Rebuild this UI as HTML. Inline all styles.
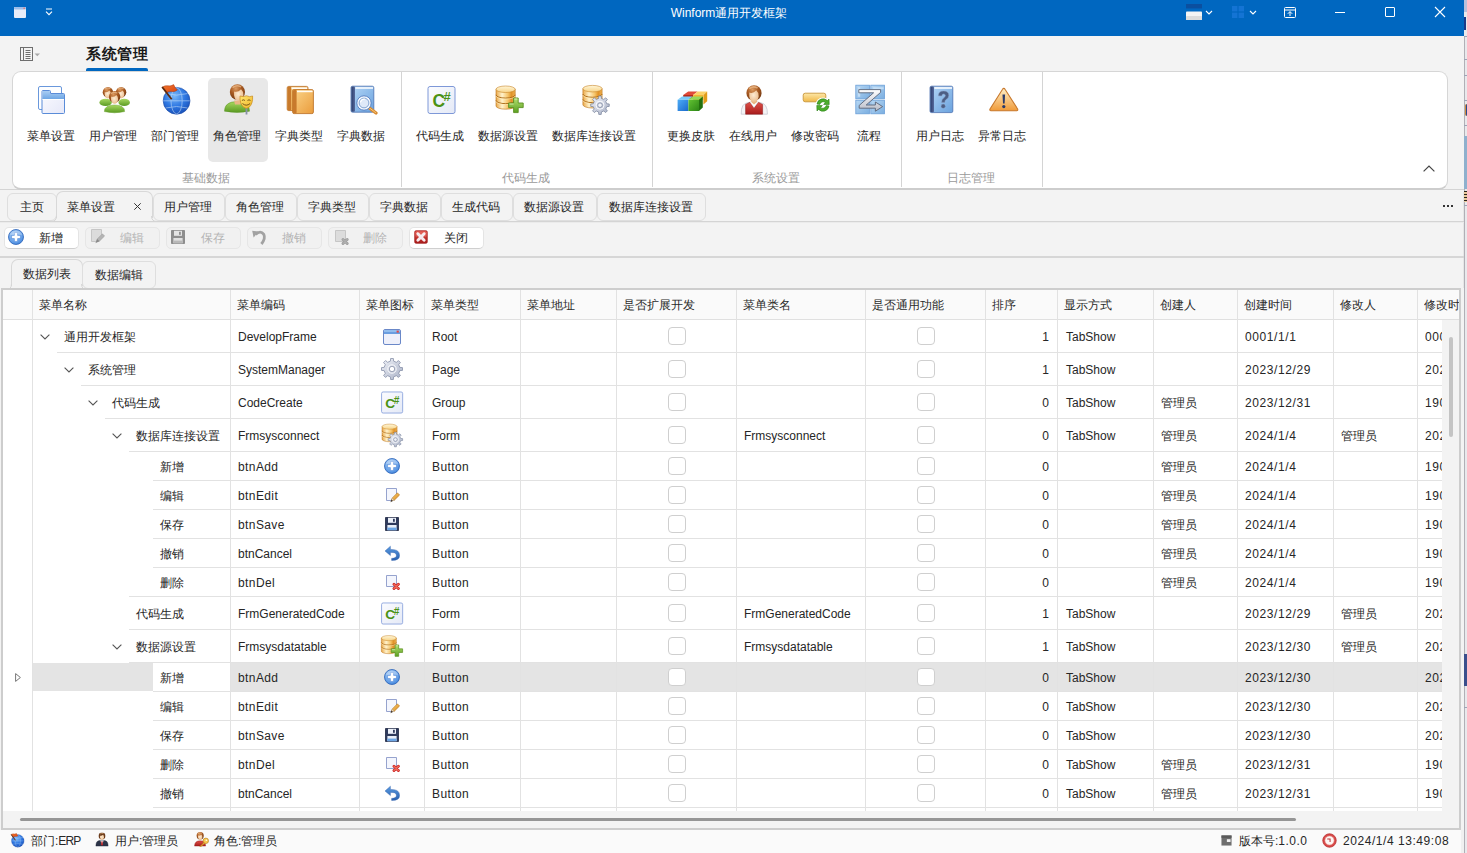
<!DOCTYPE html>
<html lang="zh"><head><meta charset="utf-8"><title>Winform通用开发框架</title>
<style>
*{box-sizing:border-box}
html,body{margin:0;padding:0}
body{width:1467px;height:853px;overflow:hidden;background:#f3f3f3;position:relative;
font-family:"Liberation Sans",sans-serif;font-size:12px;color:#262626;line-height:14px}
.a{position:absolute}
.t{position:absolute;white-space:nowrap;height:14px;line-height:14px}
.c{text-align:center}
.r{text-align:right}
.g{color:#9a9a9a}
.d{color:#b4b4b4}
.hl{position:absolute;height:1px;background:#e2e2e2}
.vl{position:absolute;width:1px;background:#e2e2e2}
.cb{position:absolute;width:18px;height:18px;border:1px solid #cfcfcf;border-radius:4px;background:#fff}
.tab{position:absolute;border:1px solid #dadada;border-bottom:none;border-radius:7px 7px 0 0;background:#f3f3f3}
.btn{position:absolute;height:22px;width:75px;border-radius:5px}
.btn.on{background:#fff;border:1px solid #e4e4e4;border-bottom-color:#cfcfcf}
.btn.off{background:#f1f1f1;border:1px solid #e6e6e6}
.dt{letter-spacing:0.6px}
.ls{letter-spacing:0.4px}
svg{position:absolute;overflow:visible}
</style></head>
<body>
<svg width="0" height="0" style="left:0;top:0"><defs>
<linearGradient id="gBlueV" x1="0" y1="0" x2="0" y2="1"><stop offset="0" stop-color="#a9cdf3"/><stop offset="1" stop-color="#6ea6e4"/></linearGradient>
<linearGradient id="gLav" x1="0" y1="0" x2="1" y2="1"><stop offset="0" stop-color="#fafbff"/><stop offset="1" stop-color="#e6e8f8"/></linearGradient>
<radialGradient id="gHair" cx=".4" cy=".28" r=".8"><stop offset="0" stop-color="#dc9a60"/><stop offset=".45" stop-color="#a85a22"/><stop offset="1" stop-color="#6a3410"/></radialGradient>
<linearGradient id="gCubeB" x1="0" y1="0" x2="1" y2="1"><stop offset="0" stop-color="#4cacf6"/><stop offset="1" stop-color="#1a68cc"/></linearGradient>
<linearGradient id="gCubeG" x1="0" y1="0" x2="1" y2="1"><stop offset="0" stop-color="#62c232"/><stop offset="1" stop-color="#2c8616"/></linearGradient>
<radialGradient id="gSkin" cx=".45" cy=".4" r=".7"><stop offset="0" stop-color="#fdebd3"/><stop offset="1" stop-color="#e8b684"/></radialGradient>
<linearGradient id="gGreen" x1="0" y1="0" x2="0" y2="1"><stop offset="0" stop-color="#a8d860"/><stop offset="1" stop-color="#5a9a22"/></linearGradient>
<radialGradient id="gGlobe" cx=".42" cy=".32" r=".78"><stop offset="0" stop-color="#7ab8f8"/><stop offset=".5" stop-color="#2f78e2"/><stop offset="1" stop-color="#1448b0"/></radialGradient>
<linearGradient id="gFlag" x1="0" y1="0" x2="1" y2="1"><stop offset="0" stop-color="#f47a30"/><stop offset="1" stop-color="#d8420e"/></linearGradient>
<linearGradient id="gMask" x1="0" y1="0" x2="1" y2="1"><stop offset="0" stop-color="#ffe870"/><stop offset="1" stop-color="#f0b428"/></linearGradient>
<linearGradient id="gBook" x1="0" y1="0" x2="1" y2="1"><stop offset="0" stop-color="#fbd58a"/><stop offset="1" stop-color="#ea9c3c"/></linearGradient>
<linearGradient id="gBookB" x1="0" y1="0" x2="1" y2="1"><stop offset="0" stop-color="#b4d6f6"/><stop offset="1" stop-color="#6aa2de"/></linearGradient>
<linearGradient id="gNavy" x1="0" y1="0" x2="1" y2="0"><stop offset="0" stop-color="#2c3c6c"/><stop offset="1" stop-color="#566a9c"/></linearGradient>
<linearGradient id="gCs" x1="0" y1="0" x2="1" y2="1"><stop offset="0" stop-color="#fbfcff"/><stop offset="1" stop-color="#e4e9f6"/></linearGradient>
<linearGradient id="gDb" x1="0" y1="0" x2="1" y2="0"><stop offset="0" stop-color="#eaa848"/><stop offset=".32" stop-color="#fff2cc"/><stop offset=".62" stop-color="#f6c468"/><stop offset=".8" stop-color="#e09228"/><stop offset="1" stop-color="#eeb050"/></linearGradient>
<linearGradient id="gDbTop" x1="0" y1="0" x2="0" y2="1"><stop offset="0" stop-color="#fff6d8"/><stop offset="1" stop-color="#f8d488"/></linearGradient>
<linearGradient id="gPlus" x1="0" y1="0" x2="0" y2="1"><stop offset="0" stop-color="#b4e070"/><stop offset="1" stop-color="#5aa020"/></linearGradient>
<linearGradient id="gGear" x1="0" y1="0" x2="1" y2="1"><stop offset="0" stop-color="#f2f4f9"/><stop offset="1" stop-color="#a8b0c6"/></linearGradient>
<linearGradient id="gRed" x1="0" y1="0" x2="0" y2="1"><stop offset="0" stop-color="#e05048"/><stop offset="1" stop-color="#a81c1c"/></linearGradient>
<linearGradient id="gYel" x1="0" y1="0" x2="0" y2="1"><stop offset="0" stop-color="#fde8a8"/><stop offset="1" stop-color="#f0b848"/></linearGradient>
<linearGradient id="gWarn" x1="0" y1="0" x2="0" y2="1"><stop offset="0" stop-color="#fff0c8"/><stop offset="1" stop-color="#f09a38"/></linearGradient>
<radialGradient id="gAdd" cx=".42" cy=".35" r=".75"><stop offset="0" stop-color="#b4d4f8"/><stop offset=".7" stop-color="#5c9ae6"/><stop offset="1" stop-color="#3a78d0"/></radialGradient>
<linearGradient id="gSq" x1="0" y1="0" x2="1" y2="1"><stop offset="0" stop-color="#b8d8f4"/><stop offset="1" stop-color="#7aaee0"/></linearGradient>
<linearGradient id="gZ" x1="0" y1="0" x2="0" y2="1"><stop offset="0" stop-color="#ffffff"/><stop offset="1" stop-color="#b8bcc8"/></linearGradient>
<linearGradient id="gUndo" x1="0" y1="0" x2="0" y2="1"><stop offset="0" stop-color="#5a9ae0"/><stop offset="1" stop-color="#2a62b0"/></linearGradient>
<linearGradient id="gPen" x1="0" y1="0" x2="1" y2="1"><stop offset="0" stop-color="#fbd070"/><stop offset="1" stop-color="#d88820"/></linearGradient>
<symbol id="i-menu" viewBox="0 0 32 32">
<rect x="2.5" y="2.5" width="23" height="23" rx="1.5" fill="#fdfeff" stroke="#6a98dc"/>
<path d="M6,7.5 Q6,6.5 7,6.5 L13.5,6.5 Q14.5,6.5 14.5,7.5 L14.5,9.5 L27.5,9.5 Q28.5,9.5 28.5,10.5 L28.5,28.5 Q28.5,29.5 27.5,29.5 L7,29.5 Q6,29.5 6,28.5Z" fill="url(#gLav)" stroke="#5a8cd8"/>
<path d="M6.5,7.5 Q6.5,7 7,7 L13.5,7 Q14,7 14,7.5 L14,10 L28,10 L28,15 L6.5,15Z" fill="url(#gBlueV)"/>
<rect x="6.5" y="15" width="21.5" height="1" fill="#ffffff"/>
</symbol><symbol id="i-users" viewBox="0 0 32 32">
<ellipse cx="7.6" cy="18.4" rx="6.2" ry="3.6" fill="url(#gGreen)"/>
<ellipse cx="26.2" cy="18.4" rx="5.7" ry="3.6" fill="url(#gGreen)"/>
<ellipse cx="9.9" cy="8.2" rx="5.2" ry="5.30" fill="url(#gHair)"/><path d="M6.68,7.94 Q9.38,8.72 11.46,6.38 Q13.12,7.68 13.12,10.54 Q12.50,14.34 9.90,14.44 Q7.30,14.34 6.68,10.54Z" fill="url(#gSkin)"/><path d="M7.04,4.98 Q9.38,3.26 11.98,4.56" fill="none" stroke="#f0c090" stroke-width="1.14" stroke-linecap="round" opacity=".7"/><ellipse cx="23.1" cy="8.2" rx="5.2" ry="5.30" fill="url(#gHair)"/><path d="M19.88,7.94 Q22.58,8.72 24.66,6.38 Q26.32,7.68 26.32,10.54 Q25.70,14.34 23.10,14.44 Q20.50,14.34 19.88,10.54Z" fill="url(#gSkin)"/><path d="M20.24,4.98 Q22.58,3.26 25.18,4.56" fill="none" stroke="#f0c090" stroke-width="1.14" stroke-linecap="round" opacity=".7"/>
<path d="M6.4,27.6 Q6.4,21 16.5,21 Q26.6,21 26.6,27.6 Q16.5,30 6.4,27.6Z" fill="url(#gGreen)" stroke="#6aa030" stroke-width=".5"/>
<ellipse cx="16.6" cy="12.9" rx="5.7" ry="5.81" fill="url(#gHair)"/><path d="M13.07,12.62 Q16.03,13.47 18.31,10.91 Q20.13,12.33 20.13,15.46 Q19.45,19.63 16.60,19.74 Q13.75,19.63 13.07,15.46Z" fill="url(#gSkin)"/><path d="M13.47,9.37 Q16.03,7.49 18.88,8.91" fill="none" stroke="#f0c090" stroke-width="1.25" stroke-linecap="round" opacity=".7"/></symbol><symbol id="i-dept" viewBox="0 0 32 32">
<circle cx="16.6" cy="16.8" r="13.4" fill="url(#gGlobe)" stroke="#1a48a4" stroke-width=".6"/>
<g fill="none" stroke="#cfe4fb" stroke-width=".9" opacity=".6">
<ellipse cx="16.6" cy="16.8" rx="5.6" ry="13"/>
<path d="M3.4,16.8 H29.8 M5.6,9.6 Q16.6,12.6 27.6,9.6 M5.6,24 Q16.6,21 27.6,24"/>
</g>
<path d="M2.4,3 Q5,1.2 8,1.8 Q11,2.4 13.6,.6 Q15,4 17.4,6 Q14.6,8.2 11.6,7.6 Q8.8,7 6.6,8.8Z" fill="url(#gFlag)" stroke="#a83810" stroke-width=".5"/>
<path d="M1.4,3.4 L2.8,2.6 L12.4,14.8 L11,15.8Z" fill="#5a2a10"/>
</symbol><symbol id="i-role" viewBox="0 0 32 32">
<path d="M2.5,27.2 Q2.5,17.6 15,17.6 Q27.5,17.6 27.5,27.2 Q15,29.6 2.5,27.2Z" fill="url(#gGreen)" stroke="#5a9428" stroke-width=".5"/>
<path d="M12,16.4 L19.5,16.4 L18.5,20.6 L13,20.6Z" fill="#e8b684"/>
<ellipse cx="15.4" cy="7.9" rx="7.6" ry="7.75" fill="url(#gHair)"/><path d="M12.06,7.52 Q16.01,8.66 19.05,5.24 Q21.48,7.14 21.48,11.32 Q20.57,16.87 16.77,17.02 Q12.97,16.87 12.06,11.32Z" fill="url(#gSkin)"/><path d="M11.22,3.19 Q14.64,0.68 18.44,2.58" fill="none" stroke="#f0c090" stroke-width="1.67" stroke-linecap="round" opacity=".7"/>
<rect x="23.6" y="23.5" width="1.8" height="7" fill="#8890a8"/>
<path d="M18,12 Q21,13.4 24.4,11.8 Q27.6,13.4 30.6,12 Q31,19.8 27.2,23.2 Q24.4,25.4 21.6,23.2 Q17.6,19.8 18,12Z" fill="url(#gMask)" stroke="#c88a18" stroke-width=".7"/>
<path d="M20.2,16.2 Q21.4,15.2 22.6,16.2 M25.8,16.2 Q27,15.2 28.2,16.2 M20.8,19.8 Q24.3,22.8 27.8,19.8" fill="none" stroke="#6a4a10" stroke-width=".9" stroke-linecap="round"/>
</symbol><symbol id="i-books" viewBox="0 0 32 32"><rect x="3.2" y="2.4" width="20.8" height="24.2" rx="1.5" fill="url(#gBook)" stroke="#b8681c" stroke-width=".8"/><rect x="3.6" y="2.8" width="3.6" height="23.4" rx="1" fill="#c87a2c"/><rect x="7.6000000000000005" y="3.4" width="15.600000000000001" height="1.6" fill="#ffffff" opacity=".95"/><rect x="8.6" y="5.6" width="20.8" height="24" rx="1.5" fill="url(#gBook)" stroke="#b8681c" stroke-width=".8"/><rect x="9.0" y="6.0" width="3.6" height="23.2" rx="1" fill="#c87a2c"/><rect x="13.0" y="6.6" width="15.600000000000001" height="1.6" fill="#ffffff" opacity=".95"/></symbol><symbol id="i-booksearch" viewBox="0 0 32 32"><rect x="5" y="2.2" width="22.8" height="26" rx="1.5" fill="url(#gBookB)" stroke="#4a70b0" stroke-width=".8"/><rect x="5.4" y="2.6" width="3.6" height="25.2" rx="1" fill="url(#gNavy)"/><rect x="9.4" y="3.2" width="17.6" height="1.6" fill="#ffffff" opacity=".95"/>
<path d="M22,23 L30,29" stroke="#d88a30" stroke-width="3.2" stroke-linecap="round"/>
<path d="M22.4,23.2 L29.6,28.6" stroke="#f8c878" stroke-width="1" stroke-linecap="round"/>
<circle cx="18" cy="19" r="6" fill="#dfe9f8" stroke="#f6f9fe" stroke-width="2"/>
<circle cx="18" cy="19" r="7.2" fill="none" stroke="#5a80c0" stroke-width=".9"/>
<circle cx="18" cy="19" r="4.9" fill="none" stroke="#6a90c8" stroke-width=".8"/>
<path d="M14.5,18 Q15.5,15 18.5,15" fill="none" stroke="#fff" stroke-width="1.2" stroke-linecap="round"/>
</symbol><symbol id="i-csharp" viewBox="0 0 32 32">
<rect x="2" y="2.5" width="27" height="27" rx="2" fill="url(#gCs)" stroke="#7e98d8"/>
<text x="6.6" y="23" font-family="Liberation Sans, sans-serif" font-weight="bold" font-size="17.5" fill="#4a9216">C</text>
<text x="17.6" y="17.4" font-family="Liberation Sans, sans-serif" font-weight="bold" font-size="13" fill="#4a9216">#</text>
</symbol><symbol id="i-dbplus" viewBox="0 0 32 32"><path d="M3,5.264 V21.936 A9.6,3.2640000000000002 0 0 0 22.2,21.936 V5.264Z" fill="url(#gDb)" stroke="#b87018" stroke-width=".6"/><path d="M3,10.821333333333332 A9.6,3.2640000000000002 0 0 0 22.2,10.821333333333332" fill="none" stroke="#a86410" stroke-width=".9"/><path d="M3,11.821333333333332 A9.6,3.2640000000000002 0 0 0 22.2,11.821333333333332" fill="none" stroke="#fff0c0" stroke-width=".7" opacity=".8"/><path d="M3,16.378666666666664 A9.6,3.2640000000000002 0 0 0 22.2,16.378666666666664" fill="none" stroke="#a86410" stroke-width=".9"/><path d="M3,17.378666666666664 A9.6,3.2640000000000002 0 0 0 22.2,17.378666666666664" fill="none" stroke="#fff0c0" stroke-width=".7" opacity=".8"/><ellipse cx="12.6" cy="5.264" rx="9.6" ry="3.2640000000000002" fill="url(#gDbTop)" stroke="#c88428" stroke-width=".6"/>
<path d="M20.6,14 H25.2 V19 H30.2 V23.6 H25.2 V28.6 H20.6 V23.6 H15.6 V19 H20.6Z" fill="url(#gPlus)" stroke="#5a8e20" stroke-width=".9" stroke-linejoin="round"/>
<path d="M21.4,15 H24.4 M16.5,20 H20.6" stroke="#e4f6c0" stroke-width=".8" fill="none"/>
</symbol><symbol id="i-dbgear" viewBox="0 0 32 32"><path d="M3.9,4.664 V20.736 A9.6,3.2640000000000002 0 0 0 23.099999999999998,20.736 V4.664Z" fill="url(#gDb)" stroke="#b87018" stroke-width=".6"/><path d="M3.9,10.021333333333335 A9.6,3.2640000000000002 0 0 0 23.099999999999998,10.021333333333335" fill="none" stroke="#a86410" stroke-width=".9"/><path d="M3.9,11.021333333333335 A9.6,3.2640000000000002 0 0 0 23.099999999999998,11.021333333333335" fill="none" stroke="#fff0c0" stroke-width=".7" opacity=".8"/><path d="M3.9,15.378666666666668 A9.6,3.2640000000000002 0 0 0 23.099999999999998,15.378666666666668" fill="none" stroke="#a86410" stroke-width=".9"/><path d="M3.9,16.378666666666668 A9.6,3.2640000000000002 0 0 0 23.099999999999998,16.378666666666668" fill="none" stroke="#fff0c0" stroke-width=".7" opacity=".8"/><ellipse cx="13.5" cy="4.664" rx="9.6" ry="3.2640000000000002" fill="url(#gDbTop)" stroke="#c88428" stroke-width=".6"/><circle cx="21" cy="21.2" r="4" fill="#f2f4f8"/><path d="M27.75,19.79 L30.22,19.98 L30.22,22.42 L27.75,22.61 L26.77,24.98 L28.38,26.85 L26.65,28.58 L24.78,26.97 L22.41,27.95 L22.22,30.42 L19.78,30.42 L19.59,27.95 L17.22,26.97 L15.35,28.58 L13.62,26.85 L15.23,24.98 L14.25,22.61 L11.78,22.42 L11.78,19.98 L14.25,19.79 L15.23,17.42 L13.62,15.55 L15.35,13.82 L17.22,15.43 L19.59,14.45 L19.78,11.98 L22.22,11.98 L22.41,14.45 L24.78,15.43 L26.65,13.82 L28.38,15.55 L26.77,17.42Z M23.30,21.20 A2.3,2.3 0 1 0 18.70,21.20 A2.3,2.3 0 1 0 23.30,21.20Z" fill="url(#gGear)" stroke="#7e88a0" stroke-width=".8" fill-rule="evenodd"/><circle cx="21" cy="21.2" r="4" fill="none" stroke="#fafbfd" stroke-width="1"/></symbol><symbol id="i-skin" viewBox="0 0 32 32">
<path d="M7.2,11 L12.2,7.4 L21.6,7.4 L17.2,11Z" fill="#e04a38"/>
<path d="M7.2,11 H17.2 V15 H7.2Z" fill="#b42a1a"/>
<path d="M17.2,11 L21.6,7.4 L31.2,7.4 L27.4,11Z" fill="#fcd268"/>
<path d="M27.4,11 L31.2,7.4 V17.2 L27.4,20.6Z" fill="#e29c1a"/>
<path d="M17.2,11 H27.4 V16 H17.2Z" fill="#f2b434"/>
<path d="M1.6,15.8 L6,12.4 L16.6,12.4 L12.4,15.8Z" fill="#7accfa"/>
<rect x="1.6" y="15.8" width="10.8" height="11.2" fill="url(#gCubeB)"/>
<path d="M12.4,15.8 L16.6,12.4 L26.8,12.4 L23,15.8Z" fill="#96d858"/>
<rect x="12.4" y="15.8" width="10.6" height="11.2" fill="url(#gCubeG)"/>
<path d="M23,15.8 L26.8,12.4 V23.6 L23,27Z" fill="#22700e"/>
</symbol><symbol id="i-online" viewBox="0 0 32 32">
<path d="M3.2,30.2 Q2.8,19.4 10,18.6 L22,18.6 Q29.8,19.4 29.4,30.2Z" fill="#f4f4f6" stroke="#b8b8c4" stroke-width=".6"/>
<path d="M7.6,30.2 L7.6,20.4 L12,18.2 L16,24 L20.2,18.2 L24.6,20.4 L24.6,30.2Z" fill="url(#gRed)" stroke="#8a1414" stroke-width=".5"/>
<path d="M12,18 L16,23.6 L20.2,18 L18.4,16.6 L13.6,16.6Z" fill="#ffffff" stroke="#c8c8d0" stroke-width=".4"/>
<path d="M13.2,15 H19 V18 L16,20.5 L13.2,18Z" fill="#e8b684"/>
<ellipse cx="16" cy="9" rx="7.6" ry="7.75" fill="url(#gHair)"/><path d="M11.29,8.62 Q15.24,9.76 18.28,6.34 Q20.71,8.24 20.71,12.42 Q19.80,17.97 16.00,18.12 Q12.20,17.97 11.29,12.42Z" fill="url(#gSkin)"/><path d="M11.82,4.29 Q15.24,1.78 19.04,3.68" fill="none" stroke="#f0c090" stroke-width="1.67" stroke-linecap="round" opacity=".7"/></symbol><symbol id="i-pwd" viewBox="0 0 32 32">
<rect x="3.2" y="9.2" width="22.6" height="8.6" rx="2" fill="url(#gYel)" stroke="#c8963a" stroke-width=".9"/>
<circle cx="23" cy="21" r="7.6" fill="#ffffff"/>
<path d="M17,20 A6.1,6.1 0 0 1 27.4,16.6 L29,15 L29.2,20.6 L23.6,20.4 L25.4,18.6 A3.4,3.4 0 0 0 19.8,20.4Z" fill="#4cae2c" stroke="#2a8018" stroke-width=".6"/>
<path d="M29,22 A6.1,6.1 0 0 1 18.6,25.4 L17,27 L16.8,21.4 L22.4,21.6 L20.6,23.4 A3.4,3.4 0 0 0 26.2,21.6Z" fill="#4cae2c" stroke="#2a8018" stroke-width=".6"/>
</symbol><symbol id="i-flow" viewBox="0 0 32 32">
<rect x="1.8" y="1.2" width="13.6" height="13.6" fill="url(#gSq)" stroke="#6a9ed8" stroke-width=".8"/>
<rect x="16.8" y="1.2" width="13.6" height="13.6" fill="url(#gSq)" stroke="#6a9ed8" stroke-width=".8"/>
<rect x="1.8" y="16.2" width="13.6" height="13.6" fill="url(#gSq)" stroke="#6a9ed8" stroke-width=".8"/>
<rect x="16.8" y="16.2" width="13.6" height="13.6" fill="url(#gSq)" stroke="#6a9ed8" stroke-width=".8"/>
<path d="M3.8,3.2 h2.4 v9.6 h-2.4Z M19.2,3.2 h10.4 v2 h-10.4Z" fill="#d4e8fa" opacity=".7"/>
<path d="M4.8,5.6 H26.6 V8.4 L12.2,21 H21.4 V18 L28.6,22.6 L21.4,27.2 V24.2 H5.2 V21.4 L19.6,8.8 H4.8Z" fill="url(#gZ)" stroke="#5a6478" stroke-width=".9" stroke-linejoin="round"/>
</symbol><symbol id="i-log" viewBox="0 0 32 32"><rect x="5" y="2.2" width="22.8" height="26.4" rx="1.5" fill="url(#gBookB)" stroke="#4a70b0" stroke-width=".8"/><rect x="5.4" y="2.6" width="3.6" height="25.599999999999998" rx="1" fill="url(#gNavy)"/><rect x="9.4" y="3.2" width="17.6" height="1.6" fill="#ffffff" opacity=".95"/>
<path d="M13.4,11.8 Q13.4,7 18.6,7 Q23.8,7 23.8,11.6 Q23.8,14.4 20.8,15.8 Q19.8,16.4 19.8,18.4 L16.6,18.4 Q16.6,15.2 18.6,14 Q20.4,13 20.4,11.6 Q20.4,10 18.6,10 Q16.8,10 16.8,12Z" fill="#4c5e84" stroke="#8a9cc0" stroke-width=".5"/>
<circle cx="18.2" cy="22.2" r="2.1" fill="#4c5e84" stroke="#8a9cc0" stroke-width=".4"/>
</symbol><symbol id="i-warn" viewBox="0 0 32 32">
<path d="M16.8,4.4 Q17.6,4.4 18,5.2 L30.6,25 Q31.2,26.6 29.6,26.8 L4,26.8 Q2.4,26.6 3,25 L15.6,5.2 Q16,4.4 16.8,4.4Z" fill="url(#gWarn)" stroke="#c8782c" stroke-width="1.1" stroke-linejoin="round"/>
<path d="M15.5,10.4 H18.1 L17.6,19.6 H16Z" fill="#2a3a6a"/>
<circle cx="16.8" cy="22.6" r="1.6" fill="#2a3a6a"/>
</symbol><symbol id="i-win" viewBox="0 0 18 16">
<rect x=".5" y=".5" width="17" height="15" rx="1.5" fill="#eef0fa" stroke="#6a88c8"/>
<path d="M1,2 Q1,1 2,1 H16 Q17,1 17,2 V5 H1Z" fill="#6a9ee0"/>
<rect x="1" y="1" width="16" height="2" fill="#9cc4f0" opacity=".8"/>
<rect x="13.6" y="1.6" width="2.2" height="2" fill="#e04848"/>
</symbol><symbol id="i-gear" viewBox="0 0 22 22"><path d="M18.83,9.36 L21.51,9.61 L21.51,12.39 L18.83,12.64 L17.70,15.38 L19.42,17.44 L17.44,19.42 L15.38,17.70 L12.64,18.83 L12.39,21.51 L9.61,21.51 L9.36,18.83 L6.62,17.70 L4.56,19.42 L2.58,17.44 L4.30,15.38 L3.17,12.64 L0.49,12.39 L0.49,9.61 L3.17,9.36 L4.30,6.62 L2.58,4.56 L4.56,2.58 L6.62,4.30 L9.36,3.17 L9.61,0.49 L12.39,0.49 L12.64,3.17 L15.38,4.30 L17.44,2.58 L19.42,4.56 L17.70,6.62Z M13.70,11.00 A2.7,2.7 0 1 0 8.30,11.00 A2.7,2.7 0 1 0 13.70,11.00Z" fill="url(#gGear)" stroke="#8890a8" stroke-width=".8" fill-rule="evenodd"/><circle cx="11" cy="11" r="4.2" fill="none" stroke="#f8f9fc" stroke-width="1"/></symbol><symbol id="i-add" viewBox="0 0 16 16">
<circle cx="8" cy="8" r="7.5" fill="url(#gAdd)" stroke="#2a62b8" stroke-width=".8"/>
<path d="M6.4,3.6 H9.6 V6.4 H12.4 V9.6 H9.6 V12.4 H6.4 V9.6 H3.6 V6.4 H6.4Z" fill="#ffffff" stroke="#3a78d0" stroke-width=".5"/>
<path d="M1.6,6.4 A6.6,6.6 0 0 1 14.4,6.4 Q8,3.4 1.6,6.4Z" fill="#ffffff" opacity=".25"/>
</symbol><symbol id="i-edit" viewBox="0 0 16 16">
<path d="M2.5,1.5 H12.5 V9 L8.5,13.5 H2.5Z" fill="#f4f6fd" stroke="#8a98c8" stroke-width=".9"/>
<path d="M7.4,13.6 L8.2,11 L13.4,5.8 L15.6,8 L10.4,13.2Z" fill="url(#gPen)" stroke="#a86818" stroke-width=".5"/>
<path d="M6.4,15.2 L8.2,11 L10.4,13.2Z" fill="#3a3028"/>
<path d="M8.2,11 L10.4,13.2 L9,14 L7.6,12.6Z" fill="#f0d8b0"/>
</symbol><symbol id="i-save" viewBox="0 0 16 16">
<path d="M1.5,1.5 H14.5 V14.5 H1.5Z" fill="#2e3a5c" stroke="#1c2440" stroke-width=".8" stroke-linejoin="round"/>
<rect x="4" y="1.8" width="8" height="5" fill="#eef2fa"/>
<rect x="9" y="2.8" width="1.8" height="3" fill="#2e3a5c"/>
<rect x="3.4" y="9" width="9.2" height="5.2" fill="#e8eef8"/>
<rect x="3.4" y="11.6" width="9.2" height="2.6" fill="#6aa4e4"/>
</symbol><symbol id="i-undo" viewBox="0 0 16 16">
<path d="M6.4,1.2 L1,6 L6.4,10.6 V7.6 Q12.4,6.8 12.4,10.6 Q12.4,13.2 7.6,13.4 V15.4 Q15.6,15.6 15.6,10.4 Q15.6,4 6.4,4.4Z" fill="url(#gUndo)" stroke="#2a5aa8" stroke-width=".4"/>
</symbol><symbol id="i-del" viewBox="0 0 16 16">
<path d="M2.5,1.5 H12.5 V12.5 H2.5Z" fill="#f4f6fd" stroke="#8a98c8" stroke-width=".9"/>
<path d="M10,10.2 L14.4,14.6 M14.4,10.2 L10,14.6" stroke="#c82020" stroke-width="2.8" stroke-linecap="round"/>
<path d="M10,10.2 L14.4,14.6 M14.4,10.2 L10,14.6" stroke="#f06858" stroke-width="1.4" stroke-linecap="round"/>
</symbol><symbol id="i-close" viewBox="0 0 16 16">
<rect x=".8" y=".8" width="14.4" height="14.4" rx="1.6" fill="url(#gRed)" stroke="#a01818" stroke-width=".8"/>
<rect x="1.6" y="1.6" width="12.8" height="6" rx="1" fill="#f08078" opacity=".45"/>
<path d="M4.4,4.4 L11.6,11.6 M11.6,4.4 L4.4,11.6" stroke="#ffffff" stroke-width="3.2" stroke-linecap="round"/>
<path d="M4.4,4.4 L11.6,11.6 M11.6,4.4 L4.4,11.6" stroke="#f4e8ee" stroke-width="2.2" stroke-linecap="round"/>
</symbol><symbol id="i-suit" viewBox="0 0 16 16">
<path d="M1,15.6 Q1,9.6 5,9.2 L11,9.2 Q15,9.6 15,15.6Z" fill="#2c3448" stroke="#1a2030" stroke-width=".4"/>
<path d="M6,9.2 L8,13.4 L10,9.2Z" fill="#f4f4f8"/>
<path d="M7.4,10 H8.6 L9,14 L8,15 L7,14Z" fill="#c82828"/>
<ellipse cx="8" cy="3.9" rx="3.8" ry="3.88" fill="#6a3a1a"/><path d="M5.64,3.71 Q7.62,4.28 9.14,2.57 Q10.36,3.52 10.36,5.61 Q9.90,8.38 8.00,8.46 Q6.10,8.38 5.64,5.61Z" fill="url(#gSkin)"/><path d="M5.91,1.54 Q7.62,0.29 9.52,1.24" fill="none" stroke="#f0c090" stroke-width="0.84" stroke-linecap="round" opacity=".7"/></symbol><symbol id="i-key" viewBox="0 0 16 16">
<path d="M.6,15 Q.6,9.4 6.6,9.4 Q12.4,9.4 12.4,15Z" fill="url(#gRed)" stroke="#8a1414" stroke-width=".4"/>
<ellipse cx="6.6" cy="3.9" rx="3.8" ry="3.88" fill="url(#gHair)"/><path d="M4.24,3.71 Q6.22,4.28 7.74,2.57 Q8.96,3.52 8.96,5.61 Q8.50,8.38 6.60,8.46 Q4.70,8.38 4.24,5.61Z" fill="url(#gSkin)"/><path d="M4.51,1.54 Q6.22,0.29 8.12,1.24" fill="none" stroke="#f0c090" stroke-width="0.84" stroke-linecap="round" opacity=".7"/>
<circle cx="12.6" cy="9.4" r="2.9" fill="#f8c850" stroke="#b8801c" stroke-width=".7"/>
<circle cx="13.2" cy="8.8" r=".9" fill="#fff8e0"/>
<path d="M10.6,11.2 L6,15.6 L7.6,15.8 L8,14.6 L9.2,14.4 L9.4,13.2 L10.6,13 L11.6,12.2Z" fill="#f0b838" stroke="#b8801c" stroke-width=".5"/>
</symbol><symbol id="i-ver" viewBox="0 0 12 12">
<rect x=".5" y=".5" width="11" height="11" fill="#6e6e6e"/>
<rect x=".5" y=".5" width="11" height="2.6" fill="#5a5a5a"/>
<rect x="6.4" y="4.6" width="4" height="3" fill="#f4f4f4"/>
</symbol><symbol id="i-clock" viewBox="0 0 16 16">
<circle cx="8" cy="8" r="7.2" fill="#d84848" stroke="#b83030" stroke-width=".8"/>
<circle cx="8" cy="8" r="4.9" fill="#fdf6f4" stroke="#e89088" stroke-width=".6"/>
<path d="M5.6,6.4 H8.6 V9.6" fill="none" stroke="#b83838" stroke-width="1.1"/>
</symbol><symbol id="i-editg" viewBox="0 0 16 16">
<path d="M2.5,1.5 H12.5 V9 L8.5,13.5 H2.5Z" fill="#dcdcdc" stroke="#c2c2c2" stroke-width=".9"/>
<path d="M7.4,13.6 L8.2,11 L13.4,5.8 L15.6,8 L10.4,13.2Z" fill="#b4b4b4" stroke="#9a9a9a" stroke-width=".5"/>
<path d="M6.4,15.2 L8.2,11 L10.4,13.2Z" fill="#8a8a8a"/>
</symbol><symbol id="i-saveg" viewBox="0 0 16 16">
<path d="M1.5,1.5 H14.5 V14.5 H1.5Z" fill="#8e8e8e" stroke="#808080" stroke-width=".8" stroke-linejoin="round"/>
<rect x="4" y="1.8" width="8" height="5" fill="#e4e4e4"/>
<rect x="9" y="2.8" width="1.8" height="3" fill="#8e8e8e"/>
<rect x="3.4" y="9" width="9.2" height="5.2" fill="#e0e0e0"/>
<rect x="3.4" y="11.6" width="9.2" height="2.6" fill="#b8b8b8"/>
</symbol><symbol id="i-undog" viewBox="0 0 16 16">
<path d="M3.6,5.4 Q8.6,1 11.8,5.4 Q13.8,9.6 9.4,15" fill="none" stroke="#a2a2a2" stroke-width="2.8" stroke-linecap="butt"/>
<path d="M.2,1.8 L6.6,2.6 L1.6,8.6Z" fill="#a2a2a2"/>
</symbol><symbol id="i-delg" viewBox="0 0 16 16">
<path d="M2.5,1.5 H12.5 V12.5 H2.5Z" fill="#dcdcdc" stroke="#c2c2c2" stroke-width=".9"/>
<path d="M10,10.4 L14.2,14.6 M14.2,10.4 L10,14.6" stroke="#9c9c9c" stroke-width="2.8" stroke-linecap="round"/>
<path d="M10,10.4 L14.2,14.6 M14.2,10.4 L10,14.6" stroke="#b0b0b0" stroke-width="1.3" stroke-linecap="round"/>
</symbol></defs></svg>
<div class="a" style="left:1464px;top:0px;width:3px;height:853px;background:#e9e9ec"></div>
<div class="a" style="left:1464px;top:36px;width:1px;height:817px;background:#b0b0b6"></div>
<div class="a" style="left:1464px;top:0px;width:3px;height:12px;background:#b9c0dc"></div>
<div class="a" style="left:1464px;top:17px;width:2px;height:13px;background:#1a3a88"></div>
<div class="a" style="left:1464px;top:36px;width:3px;height:1px;background:#9ea4b6"></div>
<div class="a" style="left:1464px;top:59px;width:3px;height:1px;background:#9ea4b6"></div>
<div class="a" style="left:1464px;top:75px;width:3px;height:1px;background:#9ea4b6"></div>
<div class="a" style="left:1464px;top:100px;width:3px;height:1px;background:#9ea4b6"></div>
<div class="a" style="left:1464px;top:125px;width:3px;height:1px;background:#9ea4b6"></div>
<div class="a" style="left:1464px;top:205px;width:3px;height:1px;background:#9ea4b6"></div>
<div class="a" style="left:1464px;top:707px;width:3px;height:1px;background:#9ea4b6"></div>
<div class="a" style="left:1465px;top:104px;width:2px;height:12px;background:#2a4a90;border-left:1px solid #d08a3a;border-radius:2px 0 0 2px"></div>
<div class="a" style="left:1464px;top:136px;width:3px;height:53px;background:#8fb0cd"></div>
<div class="a" style="left:1464px;top:191px;width:3px;height:11px;background:repeating-linear-gradient(to bottom,#2a241c 0,#2a241c 1.5px,#e8c89a 1.5px,#e8c89a 3px)"></div>
<div class="a" style="left:1464px;top:654px;width:3px;height:32px;background:#3a4f8c"></div>
<div class="a" style="left:0px;top:0px;width:1464px;height:36px;background:#0067c0"></div>
<svg style="left:14px;top:7px" width="12" height="11" viewBox="0 0 12 11"><rect x="0" y="0" width="12" height="11" rx="1" fill="#e9edf8"/><rect x="0" y="0" width="12" height="2.6" rx="1" fill="#9bbdea"/><rect x="9.4" y=".6" width="1.6" height="1.4" fill="#e07878"/></svg>
<svg style="left:45px;top:8px" width="8" height="8" viewBox="0 0 8 8"><path d="M1,1 H7 M1,3.6 L4,6.6 L7,3.6" fill="none" stroke="#fff" stroke-width="1.1"/></svg>
<div class="t c" style="left:629px;top:6px;width:200px;color:#fff">Winform通用开发框架</div>
<svg style="left:1186px;top:4px" width="28" height="17" viewBox="0 0 28 17"><rect x="0" y="0" width="16" height="4.4" fill="#0b4f9f"/><rect x="0" y="7.4" width="16" height="8.6" rx=".8" fill="#f4f4f4"/><rect x="0" y="12" width="16" height="4" rx=".8" fill="#dcdcdc"/><path d="M20,7 L23,10 L26,7" fill="none" stroke="#fff" stroke-width="1.1"/></svg>
<svg style="left:1232px;top:6px" width="28" height="13" viewBox="0 0 28 13"><g fill="#1474d4"><rect x="0" y="0" width="5.4" height="5.4"/><rect x="6.6" y="0" width="5.4" height="5.4"/><rect x="0" y="6.6" width="5.4" height="5.4"/><rect x="6.6" y="6.6" width="5.4" height="5.4"/></g><path d="M18,5 L21,8 L24,5" fill="none" stroke="#fff" stroke-width="1.1"/></svg>
<svg style="left:1284px;top:7px" width="12" height="11" viewBox="0 0 12 11"><rect x=".5" y=".5" width="11" height="10" rx="1" fill="none" stroke="#fff"/><path d="M.5,3 H11.5 M6,9 V4.8 M3.8,6.8 L6,4.6 L8.2,6.8" fill="none" stroke="#fff"/></svg>
<div class="a" style="left:1335px;top:12px;width:10px;height:1px;background:#fff"></div>
<div class="a" style="left:1385px;top:7px;width:10px;height:10px;border:1px solid #fff;border-radius:1px"></div>
<svg style="left:1435px;top:7px" width="10" height="10" viewBox="0 0 10 10"><path d="M0,0 L10,10 M10,0 L0,10" stroke="#fff" stroke-width="1.1"/></svg>
<svg style="left:20px;top:47px" width="22" height="14" viewBox="0 0 22 14"><rect x=".5" y=".5" width="12" height="13" fill="none" stroke="#6e6e6e"/><path d="M3.5,.5 V13.5 M5.5,3.5 H10.5 M5.5,5.5 H10.5 M5.5,7.5 H10.5 M5.5,9.5 H10.5 M5.5,11.5 H10.5" stroke="#6e6e6e" fill="none"/><path d="M14.6,6.4 H20 L17.3,9.2Z" fill="#a8a8a8"/></svg>
<div class="t " style="left:86px;top:45px;font-size:15px;font-weight:bold;letter-spacing:.5px;height:18px;line-height:18px;color:#1a1a1a">系统管理</div>
<div class="a" style="left:86px;top:68px;width:62px;height:3px;background:#0067c0;border-radius:2px 2px 0 0"></div>
<div class="a" style="left:0px;top:189px;width:1464px;height:1px;background:#d4d4d4"></div>
<div class="a" style="left:12px;top:71px;width:1436px;height:119px;background:#fff;border:1px solid #d6d6d6;border-bottom:2px solid #cdcdcd;border-radius:9px"></div>
<div class="a" style="left:401px;top:72px;width:1px;height:115px;background:#d4d4d4"></div>
<div class="a" style="left:652px;top:72px;width:1px;height:115px;background:#d4d4d4"></div>
<div class="a" style="left:901px;top:72px;width:1px;height:115px;background:#d4d4d4"></div>
<div class="a" style="left:1042px;top:72px;width:1px;height:115px;background:#d4d4d4"></div>
<div class="a" style="left:208px;top:78px;width:60px;height:84px;background:#e8e8e8;border-radius:5px"></div>
<svg style="left:35.5px;top:84px;" width="32" height="32" viewBox="0 0 32 32"><use href="#i-menu"/></svg>
<div class="t c" style="left:-9px;top:129px;width:120px;">菜单设置</div>
<svg style="left:97.5px;top:84px;" width="32" height="32" viewBox="0 0 32 32"><use href="#i-users"/></svg>
<div class="t c" style="left:53px;top:129px;width:120px;">用户管理</div>
<svg style="left:159.5px;top:84px;" width="32" height="32" viewBox="0 0 32 32"><use href="#i-dept"/></svg>
<div class="t c" style="left:115px;top:129px;width:120px;">部门管理</div>
<svg style="left:221.5px;top:84px;" width="32" height="32" viewBox="0 0 32 32"><use href="#i-role"/></svg>
<div class="t c" style="left:177px;top:129px;width:120px;">角色管理</div>
<svg style="left:283.5px;top:84px;" width="32" height="32" viewBox="0 0 32 32"><use href="#i-books"/></svg>
<div class="t c" style="left:239px;top:129px;width:120px;">字典类型</div>
<svg style="left:345.5px;top:84px;" width="32" height="32" viewBox="0 0 32 32"><use href="#i-booksearch"/></svg>
<div class="t c" style="left:301px;top:129px;width:120px;">字典数据</div>
<svg style="left:425.5px;top:84px;" width="32" height="32" viewBox="0 0 32 32"><use href="#i-csharp"/></svg>
<div class="t c" style="left:380px;top:129px;width:120px;">代码生成</div>
<svg style="left:492.5px;top:84px;" width="32" height="32" viewBox="0 0 32 32"><use href="#i-dbplus"/></svg>
<div class="t c" style="left:448px;top:129px;width:120px;">数据源设置</div>
<svg style="left:578.5px;top:84px;" width="32" height="32" viewBox="0 0 32 32"><use href="#i-dbgear"/></svg>
<div class="t c" style="left:534px;top:129px;width:120px;">数据库连接设置</div>
<svg style="left:675.5px;top:84px;" width="32" height="32" viewBox="0 0 32 32"><use href="#i-skin"/></svg>
<div class="t c" style="left:631px;top:129px;width:120px;">更换皮肤</div>
<svg style="left:737.5px;top:84px;" width="32" height="32" viewBox="0 0 32 32"><use href="#i-online"/></svg>
<div class="t c" style="left:693px;top:129px;width:120px;">在线用户</div>
<svg style="left:799.5px;top:84px;" width="32" height="32" viewBox="0 0 32 32"><use href="#i-pwd"/></svg>
<div class="t c" style="left:755px;top:129px;width:120px;">修改密码</div>
<svg style="left:853.5px;top:84px;" width="32" height="32" viewBox="0 0 32 32"><use href="#i-flow"/></svg>
<div class="t c" style="left:809px;top:129px;width:120px;">流程</div>
<svg style="left:924.5px;top:84px;" width="32" height="32" viewBox="0 0 32 32"><use href="#i-log"/></svg>
<div class="t c" style="left:880px;top:129px;width:120px;">用户日志</div>
<svg style="left:986.5px;top:84px;" width="32" height="32" viewBox="0 0 32 32"><use href="#i-warn"/></svg>
<div class="t c" style="left:942px;top:129px;width:120px;">异常日志</div>
<div class="t c g" style="left:165.5px;top:171px;width:80px;">基础数据</div>
<div class="t c g" style="left:485.5px;top:171px;width:80px;">代码生成</div>
<div class="t c g" style="left:735.5px;top:171px;width:80px;">系统设置</div>
<div class="t c g" style="left:930.5px;top:171px;width:80px;">日志管理</div>
<svg style="left:1423px;top:165px" width="12" height="7" viewBox="0 0 12 7"><path d="M.6,6.4 L6,1 L11.4,6.4" fill="none" stroke="#444" stroke-width="1.2"/></svg>
<div class="a" style="left:1463px;top:192px;width:1px;height:96px;background:#e6e6e6"></div>
<div class="a" style="left:0px;top:221px;width:1464px;height:1px;background:#d4d4d4"></div>
<div class="a" style="left:0px;top:222px;width:1464px;height:1px;background:#ebebeb"></div>
<div class="a" style="left:7px;top:193px;width:50px;height:28px;border:1px solid #dedede;border-radius:6px"></div>
<div class="t c" style="left:7px;top:200px;width:49px;">主页</div>
<div class="a" style="left:56px;top:191px;width:97px;height:27px;border:1px solid #d8d8d8;border-bottom:none;border-radius:7px 7px 0 0"></div>
<svg style="left:51px;top:216px" width="6" height="6" viewBox="0 0 6 6"><path d="M5.5,0 Q5.5,5.5 0,5.5" fill="none" stroke="#d6d6d6" stroke-width="1"/></svg>
<svg style="left:151px;top:216px" width="6" height="6" viewBox="0 0 6 6"><path d="M.5,0 Q.5,5.5 6,5.5" fill="none" stroke="#d6d6d6" stroke-width="1"/></svg>
<div class="t " style="left:67px;top:200px;">菜单设置</div>
<svg style="left:134px;top:203px" width="7" height="7" viewBox="0 0 7 7"><path d="M.3,.3 L6.7,6.7 M6.7,.3 L.3,6.7" stroke="#333" stroke-width="1"/></svg>
<div class="a" style="left:153px;top:193px;width:72px;height:28px;border:1px solid #dedede;border-radius:6px"></div>
<div class="t c" style="left:152px;top:200px;width:72px;">用户管理</div>
<div class="a" style="left:225px;top:193px;width:72px;height:28px;border:1px solid #dedede;border-radius:6px"></div>
<div class="t c" style="left:224px;top:200px;width:72px;">角色管理</div>
<div class="a" style="left:297px;top:193px;width:72px;height:28px;border:1px solid #dedede;border-radius:6px"></div>
<div class="t c" style="left:296px;top:200px;width:72px;">字典类型</div>
<div class="a" style="left:369px;top:193px;width:72px;height:28px;border:1px solid #dedede;border-radius:6px"></div>
<div class="t c" style="left:368px;top:200px;width:72px;">字典数据</div>
<div class="a" style="left:441px;top:193px;width:72px;height:28px;border:1px solid #dedede;border-radius:6px"></div>
<div class="t c" style="left:440px;top:200px;width:72px;">生成代码</div>
<div class="a" style="left:513px;top:193px;width:84px;height:28px;border:1px solid #dedede;border-radius:6px"></div>
<div class="t c" style="left:512px;top:200px;width:84px;">数据源设置</div>
<div class="a" style="left:597px;top:193px;width:109px;height:28px;border:1px solid #dedede;border-radius:6px"></div>
<div class="t c" style="left:596px;top:200px;width:109px;">数据库连接设置</div>
<div class="a" style="left:1443px;top:205px;width:2px;height:2px;background:#333"></div>
<div class="a" style="left:1447px;top:205px;width:2px;height:2px;background:#333"></div>
<div class="a" style="left:1451px;top:205px;width:2px;height:2px;background:#333"></div>
<div class="a" style="left:0px;top:256px;width:1464px;height:2px;background:#d6d6d6"></div>
<div class="btn on" style="left:4px;top:227px"></div>
<svg style="left:8px;top:229px;" width="16" height="16" viewBox="0 0 16 16"><use href="#i-add"/></svg>
<div class="t " style="left:39px;top:231px;">新增</div>
<div class="btn off" style="left:85px;top:227px"></div>
<svg style="left:89px;top:228px;" width="16" height="16" viewBox="0 0 16 16"><use href="#i-editg"/></svg>
<div class="t d" style="left:120px;top:231px;">编辑</div>
<div class="btn off" style="left:166px;top:227px"></div>
<svg style="left:170px;top:229px;" width="16" height="16" viewBox="0 0 16 16"><use href="#i-saveg"/></svg>
<div class="t d" style="left:201px;top:231px;">保存</div>
<div class="btn off" style="left:247px;top:227px"></div>
<svg style="left:252px;top:229px;" width="16" height="16" viewBox="0 0 16 16"><use href="#i-undog"/></svg>
<div class="t d" style="left:282px;top:231px;">撤销</div>
<div class="btn off" style="left:328px;top:227px"></div>
<svg style="left:333px;top:229px;" width="16" height="16" viewBox="0 0 16 16"><use href="#i-delg"/></svg>
<div class="t d" style="left:363px;top:231px;">删除</div>
<div class="btn on" style="left:409px;top:227px"></div>
<svg style="left:414px;top:230px;" width="14" height="14" viewBox="0 0 16 16"><use href="#i-close"/></svg>
<div class="t " style="left:444px;top:231px;">关闭</div>
<div class="a" style="left:11px;top:259px;width:72px;height:27px;border:1px solid #d8d8d8;border-bottom:none;border-radius:7px 7px 0 0"></div>
<svg style="left:6px;top:284px" width="6" height="6" viewBox="0 0 6 6"><path d="M5.5,0 Q5.5,5.5 0,5.5" fill="none" stroke="#d6d6d6" stroke-width="1"/></svg>
<svg style="left:81px;top:284px" width="6" height="6" viewBox="0 0 6 6"><path d="M.5,0 Q.5,5.5 6,5.5" fill="none" stroke="#d6d6d6" stroke-width="1"/></svg>
<div class="a" style="left:82px;top:261px;width:74px;height:28px;border:1px solid #dedede;border-radius:6px"></div>
<div class="t c" style="left:11px;top:267px;width:72px;">数据列表</div>
<div class="t c" style="left:82px;top:268px;width:73px;">数据编辑</div>
<div class="a" style="left:1px;top:288px;width:1460px;height:542px;background:#fff;border:2px solid #cdcdcd"></div>
<div class="a" style="left:3px;top:290px;width:1456px;height:29px;background:#fafafa"></div>
<div class="t " style="left:39px;top:298px;color:#2a2a2a">菜单名称</div>
<div class="t " style="left:237px;top:298px;color:#2a2a2a">菜单编码</div>
<div class="t " style="left:366px;top:298px;color:#2a2a2a">菜单图标</div>
<div class="t " style="left:431px;top:298px;color:#2a2a2a">菜单类型</div>
<div class="t " style="left:527px;top:298px;color:#2a2a2a">菜单地址</div>
<div class="t " style="left:623px;top:298px;color:#2a2a2a">是否扩展开发</div>
<div class="t " style="left:743px;top:298px;color:#2a2a2a">菜单类名</div>
<div class="t " style="left:872px;top:298px;color:#2a2a2a">是否通用功能</div>
<div class="t " style="left:992px;top:298px;color:#2a2a2a">排序</div>
<div class="t " style="left:1064px;top:298px;color:#2a2a2a">显示方式</div>
<div class="t " style="left:1160px;top:298px;color:#2a2a2a">创建人</div>
<div class="t " style="left:1244px;top:298px;color:#2a2a2a">创建时间</div>
<div class="t " style="left:1340px;top:298px;color:#2a2a2a">修改人</div>
<div class="t " style="left:1424px;top:298px;color:#2a2a2a;overflow:hidden;width:35px">修改时间</div>
<div class="a" style="left:3px;top:319px;width:1456px;height:1px;background:#e0e0e0"></div>
<div class="hl" style="left:57px;top:352px;width:1385px"></div>
<svg style="left:40px;top:334px" width="10" height="6" viewBox="0 0 10 6"><path d="M.6,.6 L5,5 L9.4,.6" fill="none" stroke="#555" stroke-width="1.1"/></svg>
<div class="t " style="left:64px;top:330px;">通用开发框架</div>
<div class="t " style="left:238px;top:330px;">DevelopFrame</div>
<svg style="left:383px;top:328.5px;" width="18" height="16" viewBox="0 0 18 16"><use href="#i-win"/></svg>
<div class="t " style="left:432px;top:330px;">Root</div>
<div class="cb" style="left:668px;top:327px"></div>
<div class="cb" style="left:917px;top:327px"></div>
<div class="t r" style="left:1000px;top:330px;width:49px;">1</div>
<div class="t " style="left:1066px;top:330px;">TabShow</div>
<div class="t dt" style="left:1245px;top:330px;">0001/1/1</div>
<div class="t dt" style="left:1425px;top:330px;width:17px;overflow:hidden">0001/1/1</div>
<div class="hl" style="left:81px;top:385px;width:1361px"></div>
<svg style="left:64px;top:367px" width="10" height="6" viewBox="0 0 10 6"><path d="M.6,.6 L5,5 L9.4,.6" fill="none" stroke="#555" stroke-width="1.1"/></svg>
<div class="t " style="left:88px;top:363px;">系统管理</div>
<div class="t " style="left:238px;top:363px;">SystemManager</div>
<svg style="left:381px;top:358px;" width="22" height="22" viewBox="0 0 22 22"><use href="#i-gear"/></svg>
<div class="t " style="left:432px;top:363px;">Page</div>
<div class="cb" style="left:668px;top:360px"></div>
<div class="cb" style="left:917px;top:360px"></div>
<div class="t r" style="left:1000px;top:363px;width:49px;">1</div>
<div class="t " style="left:1066px;top:363px;">TabShow</div>
<div class="t dt" style="left:1245px;top:363px;">2023/12/29</div>
<div class="t dt" style="left:1425px;top:363px;width:17px;overflow:hidden">2023/12/29</div>
<div class="hl" style="left:105px;top:418px;width:1337px"></div>
<svg style="left:88px;top:400px" width="10" height="6" viewBox="0 0 10 6"><path d="M.6,.6 L5,5 L9.4,.6" fill="none" stroke="#555" stroke-width="1.1"/></svg>
<div class="t " style="left:112px;top:396px;">代码生成</div>
<div class="t " style="left:238px;top:396px;">CodeCreate</div>
<svg style="left:380px;top:389.5px;" width="25" height="25" viewBox="0 0 32 32"><use href="#i-csharp"/></svg>
<div class="t " style="left:432px;top:396px;">Group</div>
<div class="cb" style="left:668px;top:393px"></div>
<div class="cb" style="left:917px;top:393px"></div>
<div class="t r" style="left:1000px;top:396px;width:49px;">0</div>
<div class="t " style="left:1066px;top:396px;">TabShow</div>
<div class="t " style="left:1161px;top:396px;">管理员</div>
<div class="t dt" style="left:1245px;top:396px;">2023/12/31</div>
<div class="t dt" style="left:1425px;top:396px;width:17px;overflow:hidden">1900/1/1</div>
<div class="hl" style="left:129px;top:451px;width:1313px"></div>
<svg style="left:112px;top:433px" width="10" height="6" viewBox="0 0 10 6"><path d="M.6,.6 L5,5 L9.4,.6" fill="none" stroke="#555" stroke-width="1.1"/></svg>
<div class="t " style="left:136px;top:429px;">数据库连接设置</div>
<div class="t " style="left:238px;top:429px;">Frmsysconnect</div>
<svg style="left:379.3px;top:422.5px;" width="25" height="25" viewBox="0 0 32 32"><use href="#i-dbgear"/></svg>
<div class="t " style="left:432px;top:429px;">Form</div>
<div class="cb" style="left:668px;top:426px"></div>
<div class="t " style="left:744px;top:429px;">Frmsysconnect</div>
<div class="cb" style="left:917px;top:426px"></div>
<div class="t r" style="left:1000px;top:429px;width:49px;">0</div>
<div class="t " style="left:1066px;top:429px;">TabShow</div>
<div class="t " style="left:1161px;top:429px;">管理员</div>
<div class="t dt" style="left:1245px;top:429px;">2024/1/4</div>
<div class="t " style="left:1341px;top:429px;">管理员</div>
<div class="t dt" style="left:1425px;top:429px;width:17px;overflow:hidden">2024/1/4</div>
<div class="hl" style="left:153px;top:480px;width:1289px"></div>
<div class="t " style="left:160px;top:460px;">新增</div>
<div class="t ls" style="left:238px;top:460px;">btnAdd</div>
<svg style="left:384px;top:458px;" width="16" height="16" viewBox="0 0 16 16"><use href="#i-add"/></svg>
<div class="t ls" style="left:432px;top:460px;">Button</div>
<div class="cb" style="left:668px;top:457px"></div>
<div class="cb" style="left:917px;top:457px"></div>
<div class="t r" style="left:1000px;top:460px;width:49px;">0</div>
<div class="t " style="left:1161px;top:460px;">管理员</div>
<div class="t dt" style="left:1245px;top:460px;">2024/1/4</div>
<div class="t dt" style="left:1425px;top:460px;width:17px;overflow:hidden">1900/1/1</div>
<div class="hl" style="left:153px;top:509px;width:1289px"></div>
<div class="t " style="left:160px;top:489px;">编辑</div>
<div class="t ls" style="left:238px;top:489px;">btnEdit</div>
<svg style="left:384px;top:487px;" width="16" height="16" viewBox="0 0 16 16"><use href="#i-edit"/></svg>
<div class="t ls" style="left:432px;top:489px;">Button</div>
<div class="cb" style="left:668px;top:486px"></div>
<div class="cb" style="left:917px;top:486px"></div>
<div class="t r" style="left:1000px;top:489px;width:49px;">0</div>
<div class="t " style="left:1161px;top:489px;">管理员</div>
<div class="t dt" style="left:1245px;top:489px;">2024/1/4</div>
<div class="t dt" style="left:1425px;top:489px;width:17px;overflow:hidden">1900/1/1</div>
<div class="hl" style="left:153px;top:538px;width:1289px"></div>
<div class="t " style="left:160px;top:518px;">保存</div>
<div class="t ls" style="left:238px;top:518px;">btnSave</div>
<svg style="left:384px;top:516px;" width="16" height="16" viewBox="0 0 16 16"><use href="#i-save"/></svg>
<div class="t ls" style="left:432px;top:518px;">Button</div>
<div class="cb" style="left:668px;top:515px"></div>
<div class="cb" style="left:917px;top:515px"></div>
<div class="t r" style="left:1000px;top:518px;width:49px;">0</div>
<div class="t " style="left:1161px;top:518px;">管理员</div>
<div class="t dt" style="left:1245px;top:518px;">2024/1/4</div>
<div class="t dt" style="left:1425px;top:518px;width:17px;overflow:hidden">1900/1/1</div>
<div class="hl" style="left:153px;top:567px;width:1289px"></div>
<div class="t " style="left:160px;top:547px;">撤销</div>
<div class="t " style="left:238px;top:547px;">btnCancel</div>
<svg style="left:384px;top:545px;" width="16" height="16" viewBox="0 0 16 16"><use href="#i-undo"/></svg>
<div class="t ls" style="left:432px;top:547px;">Button</div>
<div class="cb" style="left:668px;top:544px"></div>
<div class="cb" style="left:917px;top:544px"></div>
<div class="t r" style="left:1000px;top:547px;width:49px;">0</div>
<div class="t " style="left:1161px;top:547px;">管理员</div>
<div class="t dt" style="left:1245px;top:547px;">2024/1/4</div>
<div class="t dt" style="left:1425px;top:547px;width:17px;overflow:hidden">1900/1/1</div>
<div class="hl" style="left:129px;top:596px;width:1313px"></div>
<div class="t " style="left:160px;top:576px;">删除</div>
<div class="t ls" style="left:238px;top:576px;">btnDel</div>
<svg style="left:384px;top:574px;" width="16" height="16" viewBox="0 0 16 16"><use href="#i-del"/></svg>
<div class="t ls" style="left:432px;top:576px;">Button</div>
<div class="cb" style="left:668px;top:573px"></div>
<div class="cb" style="left:917px;top:573px"></div>
<div class="t r" style="left:1000px;top:576px;width:49px;">0</div>
<div class="t " style="left:1161px;top:576px;">管理员</div>
<div class="t dt" style="left:1245px;top:576px;">2024/1/4</div>
<div class="t dt" style="left:1425px;top:576px;width:17px;overflow:hidden">1900/1/1</div>
<div class="hl" style="left:129px;top:629px;width:1313px"></div>
<div class="t " style="left:136px;top:607px;">代码生成</div>
<div class="t " style="left:238px;top:607px;">FrmGeneratedCode</div>
<svg style="left:380px;top:600.5px;" width="25" height="25" viewBox="0 0 32 32"><use href="#i-csharp"/></svg>
<div class="t " style="left:432px;top:607px;">Form</div>
<div class="cb" style="left:668px;top:604px"></div>
<div class="t " style="left:744px;top:607px;">FrmGeneratedCode</div>
<div class="cb" style="left:917px;top:604px"></div>
<div class="t r" style="left:1000px;top:607px;width:49px;">1</div>
<div class="t " style="left:1066px;top:607px;">TabShow</div>
<div class="t dt" style="left:1245px;top:607px;">2023/12/29</div>
<div class="t " style="left:1341px;top:607px;">管理员</div>
<div class="t dt" style="left:1425px;top:607px;width:17px;overflow:hidden">2023/12/29</div>
<div class="hl" style="left:129px;top:662px;width:1313px"></div>
<svg style="left:112px;top:644px" width="10" height="6" viewBox="0 0 10 6"><path d="M.6,.6 L5,5 L9.4,.6" fill="none" stroke="#555" stroke-width="1.1"/></svg>
<div class="t " style="left:136px;top:640px;">数据源设置</div>
<div class="t " style="left:238px;top:640px;">Frmsysdatatable</div>
<svg style="left:379.3px;top:633.5px;" width="25" height="25" viewBox="0 0 32 32"><use href="#i-dbplus"/></svg>
<div class="t " style="left:432px;top:640px;">Form</div>
<div class="cb" style="left:668px;top:637px"></div>
<div class="t " style="left:744px;top:640px;">Frmsysdatatable</div>
<div class="cb" style="left:917px;top:637px"></div>
<div class="t r" style="left:1000px;top:640px;width:49px;">1</div>
<div class="t " style="left:1066px;top:640px;">TabShow</div>
<div class="t dt" style="left:1245px;top:640px;">2023/12/30</div>
<div class="t " style="left:1341px;top:640px;">管理员</div>
<div class="t dt" style="left:1425px;top:640px;width:17px;overflow:hidden">2023/12/30</div>
<div class="a" style="left:33px;top:663px;width:1409px;height:28px;background:#e4e4e4"></div>
<div class="a" style="left:153px;top:663px;width:77px;height:28px;background:#fff"></div>
<div class="hl" style="left:153px;top:691px;width:1289px"></div>
<div class="t " style="left:160px;top:671px;">新增</div>
<div class="t ls" style="left:238px;top:671px;">btnAdd</div>
<svg style="left:384px;top:669px;" width="16" height="16" viewBox="0 0 16 16"><use href="#i-add"/></svg>
<div class="t ls" style="left:432px;top:671px;">Button</div>
<div class="cb" style="left:668px;top:668px"></div>
<div class="cb" style="left:917px;top:668px"></div>
<div class="t r" style="left:1000px;top:671px;width:49px;">0</div>
<div class="t " style="left:1066px;top:671px;">TabShow</div>
<div class="t dt" style="left:1245px;top:671px;">2023/12/30</div>
<div class="t dt" style="left:1425px;top:671px;width:17px;overflow:hidden">2023/12/30</div>
<div class="hl" style="left:153px;top:720px;width:1289px"></div>
<div class="t " style="left:160px;top:700px;">编辑</div>
<div class="t ls" style="left:238px;top:700px;">btnEdit</div>
<svg style="left:384px;top:698px;" width="16" height="16" viewBox="0 0 16 16"><use href="#i-edit"/></svg>
<div class="t ls" style="left:432px;top:700px;">Button</div>
<div class="cb" style="left:668px;top:697px"></div>
<div class="cb" style="left:917px;top:697px"></div>
<div class="t r" style="left:1000px;top:700px;width:49px;">0</div>
<div class="t " style="left:1066px;top:700px;">TabShow</div>
<div class="t dt" style="left:1245px;top:700px;">2023/12/30</div>
<div class="t dt" style="left:1425px;top:700px;width:17px;overflow:hidden">2023/12/30</div>
<div class="hl" style="left:153px;top:749px;width:1289px"></div>
<div class="t " style="left:160px;top:729px;">保存</div>
<div class="t ls" style="left:238px;top:729px;">btnSave</div>
<svg style="left:384px;top:727px;" width="16" height="16" viewBox="0 0 16 16"><use href="#i-save"/></svg>
<div class="t ls" style="left:432px;top:729px;">Button</div>
<div class="cb" style="left:668px;top:726px"></div>
<div class="cb" style="left:917px;top:726px"></div>
<div class="t r" style="left:1000px;top:729px;width:49px;">0</div>
<div class="t " style="left:1066px;top:729px;">TabShow</div>
<div class="t dt" style="left:1245px;top:729px;">2023/12/30</div>
<div class="t dt" style="left:1425px;top:729px;width:17px;overflow:hidden">2023/12/30</div>
<div class="hl" style="left:153px;top:778px;width:1289px"></div>
<div class="t " style="left:160px;top:758px;">删除</div>
<div class="t ls" style="left:238px;top:758px;">btnDel</div>
<svg style="left:384px;top:756px;" width="16" height="16" viewBox="0 0 16 16"><use href="#i-del"/></svg>
<div class="t ls" style="left:432px;top:758px;">Button</div>
<div class="cb" style="left:668px;top:755px"></div>
<div class="cb" style="left:917px;top:755px"></div>
<div class="t r" style="left:1000px;top:758px;width:49px;">0</div>
<div class="t " style="left:1066px;top:758px;">TabShow</div>
<div class="t " style="left:1161px;top:758px;">管理员</div>
<div class="t dt" style="left:1245px;top:758px;">2023/12/31</div>
<div class="t dt" style="left:1425px;top:758px;width:17px;overflow:hidden">1900/1/1</div>
<div class="hl" style="left:153px;top:807px;width:1289px"></div>
<div class="t " style="left:160px;top:787px;">撤销</div>
<div class="t " style="left:238px;top:787px;">btnCancel</div>
<svg style="left:384px;top:785px;" width="16" height="16" viewBox="0 0 16 16"><use href="#i-undo"/></svg>
<div class="t ls" style="left:432px;top:787px;">Button</div>
<div class="cb" style="left:668px;top:784px"></div>
<div class="cb" style="left:917px;top:784px"></div>
<div class="t r" style="left:1000px;top:787px;width:49px;">0</div>
<div class="t " style="left:1066px;top:787px;">TabShow</div>
<div class="t " style="left:1161px;top:787px;">管理员</div>
<div class="t dt" style="left:1245px;top:787px;">2023/12/31</div>
<div class="t dt" style="left:1425px;top:787px;width:17px;overflow:hidden">1900/1/1</div>
<div class="vl" style="left:32px;top:290px;height:521px"></div>
<div class="vl" style="left:230px;top:290px;height:521px"></div>
<div class="vl" style="left:359px;top:290px;height:521px"></div>
<div class="vl" style="left:424px;top:290px;height:521px"></div>
<div class="vl" style="left:520px;top:290px;height:521px"></div>
<div class="vl" style="left:616px;top:290px;height:521px"></div>
<div class="vl" style="left:736px;top:290px;height:521px"></div>
<div class="vl" style="left:865px;top:290px;height:521px"></div>
<div class="vl" style="left:985px;top:290px;height:521px"></div>
<div class="vl" style="left:1057px;top:290px;height:521px"></div>
<div class="vl" style="left:1153px;top:290px;height:521px"></div>
<div class="vl" style="left:1237px;top:290px;height:521px"></div>
<div class="vl" style="left:1333px;top:290px;height:521px"></div>
<div class="vl" style="left:1417px;top:290px;height:521px"></div>
<svg style="left:15px;top:673px" width="6" height="9" viewBox="0 0 6 9"><path d="M.6,.6 L5.4,4.5 L.6,8.4Z" fill="none" stroke="#777" stroke-width="1"/></svg>
<div class="a" style="left:1442px;top:320px;width:17px;height:508px;background:#f3f3f3"></div>
<div class="a" style="left:3px;top:811px;width:1456px;height:17px;background:#f3f3f3"></div>
<div class="a" style="left:1449px;top:337px;width:4px;height:100px;background:#c4c4c4;border-radius:2px"></div>
<div class="a" style="left:20px;top:818px;width:1276px;height:3px;background:#959595;border-radius:2px"></div>
<div class="a" style="left:0px;top:830px;width:1461px;height:23px;background:#fafafa"></div>
<div class="a" style="left:1461px;top:830px;width:3px;height:23px;background:#f0f0f0"></div>
<svg style="left:10px;top:833px;" width="15" height="15" viewBox="0 0 32 32"><use href="#i-dept"/></svg>
<div class="t " style="left:31px;top:834px;">部门:<span style="letter-spacing:-.9px">ERP</span></div>
<svg style="left:95px;top:832px;" width="14" height="15" viewBox="0 0 16 16"><use href="#i-suit"/></svg>
<div class="t " style="left:115px;top:834px;">用户:管理员</div>
<svg style="left:194px;top:832px;" width="15" height="15" viewBox="0 0 16 16"><use href="#i-key"/></svg>
<div class="t " style="left:214px;top:834px;">角色:管理员</div>
<svg style="left:1221px;top:835px;" width="11" height="11" viewBox="0 0 12 12"><use href="#i-ver"/></svg>
<div class="t " style="left:1239px;top:834px;">版本号:<span style="letter-spacing:.5px">1.0.0</span></div>
<svg style="left:1322px;top:833px;" width="15" height="15" viewBox="0 0 16 16"><use href="#i-clock"/></svg>
<div class="t " style="left:1343px;top:834px;letter-spacing:.55px">2024/1/4 13:49:08</div>
</body></html>
